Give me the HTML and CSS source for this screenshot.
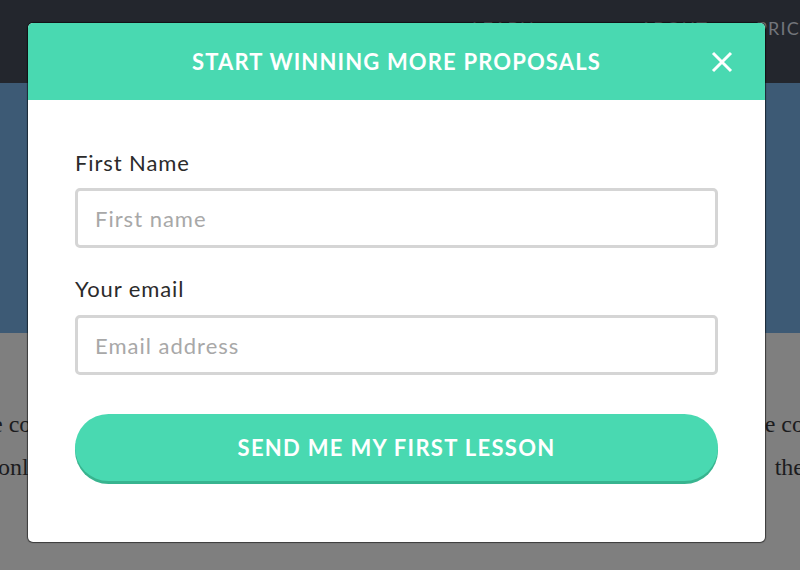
FILE: index.html
```html
<!DOCTYPE html>
<html>
<head>
<meta charset="utf-8">
<link rel="stylesheet" href="styles.css">
</head>
<body>
<div class="page">
  <header class="nav">
    <span class="nav-item">LEARN MORE</span>
    <span class="nav-item">ABOUT</span>
    <span class="nav-item">PRIC</span>
  </header>
  <section class="hero"></section>
  <section class="content">
    <div class="line"><span class="frag-l">e co</span><span class="frag-r">e co</span></div>
    <div class="line"><span class="frag-l2">onl</span><span class="frag-r">the</span></div>
  </section>
</div>

<div class="modal">
  <div class="modal-head">
    <h2 class="modal-title">START WINNING MORE PROPOSALS</h2>
    <button class="close" aria-label="Close">
      <svg width="22" height="22" viewBox="0 0 22 22"><path d="M2 2 L20 20 M20 2 L2 20" stroke="#fff" stroke-width="3" stroke-linecap="butt"/></svg>
    </button>
  </div>
  <form class="modal-body">
    <label class="label">First Name</label>
    <input class="field" type="text" placeholder="First name">
    <label class="label second">Your email</label>
    <input class="field" type="text" placeholder="Email address">
    <button class="submit" type="button">SEND ME MY FIRST LESSON</button>
  </form>
</div>
</body>
</html>
```
FILE: styles.css
```css
html, body {
  margin: 0;
  padding: 0;
  width: 800px;
  height: 570px;
  overflow: hidden;
  background: #7f7f7f;
}

.page {
  display: flex;
  flex-direction: column;
  height: 570px;
}

.nav {
  height: 83px;
  background: #23262d;
  display: flex;
  gap: 48px;
  padding: 17px 0 0 472px;
  box-sizing: border-box;
}

.nav-item {
  font-family: "Lato", "Liberation Sans", sans-serif;
  font-size: 18px;
  letter-spacing: 1.2px;
  color: #72757b;
}

.hero {
  height: 250px;
  background: #3d5a75;
}

.content {
  flex: 1;
  background: #7f7f7f;
  padding-top: 70px;
  font-family: "Liberation Serif", "DejaVu Serif", serif;
  font-size: 24px;
  color: #1c1c1e;
}

.line {
  display: flex;
  justify-content: space-between;
  height: 43px;
  line-height: 43px;
}

.frag-l { margin-left: -8px; }
.frag-l2 { margin-left: -2px; }
.frag-r { margin-right: -4px; }

.modal {
  position: absolute;
  left: 28px;
  top: 23px;
  width: 737px;
  background: #fff;
  border-radius: 5px;
  box-shadow: 0 0 1px 1px rgba(0,0,0,0.55);
  overflow: hidden;
}

.modal-head {
  height: 77px;
  background: #49d9b1;
  display: flex;
  align-items: center;
  justify-content: center;
  position: relative;
}

.modal-title {
  margin: 0;
  font-family: "Lato", "Liberation Sans", sans-serif;
  font-weight: 700;
  font-size: 22px;
  letter-spacing: 1.15px;
  color: #fff;
}

.close {
  position: absolute;
  right: 32px;
  top: 28px;
  width: 22px;
  height: 22px;
  padding: 0;
  border: 0;
  background: none;
  display: flex;
}

.modal-body {
  display: flex;
  flex-direction: column;
  padding: 50px 47px 61px 47px;
  margin: 0;
}

.label {
  font-family: "Lato", "Liberation Sans", sans-serif;
  font-size: 22px;
  line-height: 26px;
  letter-spacing: 0.9px;
  color: #2b2b2b;
  margin-bottom: 12px;
}

.label.second {
  margin-top: 28px;
  margin-bottom: 13px;
}

.field {
  height: 60px;
  box-sizing: border-box;
  border: 3px solid #d5d5d5;
  border-radius: 5px;
  padding: 0 17px;
  font-family: "Lato", "Liberation Sans", sans-serif;
  font-size: 22px;
  letter-spacing: 1px;
  color: #333;
  outline: none;
}

.field::placeholder {
  color: #a8a8a8;
}

.submit {
  margin-top: 39px;
  height: 67px;
  border: 0;
  border-radius: 34px;
  background: #49d9b1;
  box-shadow: 0 3px 0 #38b48f;
  font-family: "Lato", "Liberation Sans", sans-serif;
  font-weight: 700;
  font-size: 22px;
  letter-spacing: 1.3px;
  color: #fff;
  padding: 0;
}
```
